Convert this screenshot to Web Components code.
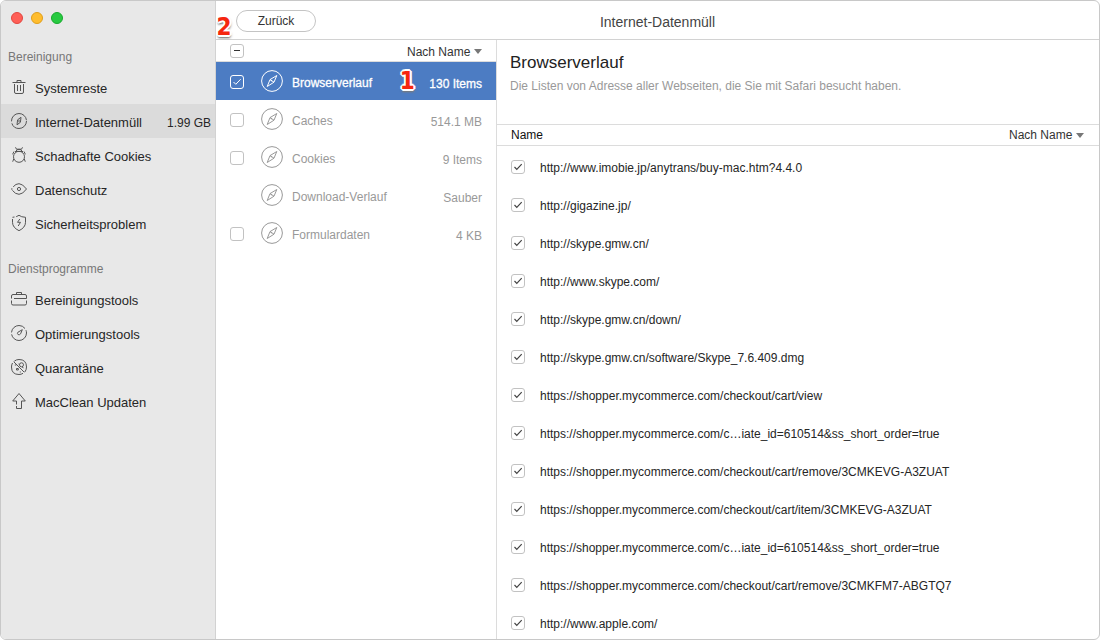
<!DOCTYPE html>
<html lang="de">
<head>
<meta charset="utf-8">
<meta name="viewport" content="width=device-width, initial-scale=1">
<title>MacClean – Internet-Datenmüll</title>
<style>
  html, body { height: 100%; }
  body { margin: 0; background: #fff; color: #262626; font: 12px/16px "Liberation Sans", Arial, sans-serif; }
</style>
</head>
<body>
<mc-window>
  <mc-sidebar slot="sidebar">
    <mc-nav-group heading="Bereinigung">
      <mc-nav-item icon="trash">Systemreste</mc-nav-item>
      <mc-nav-item icon="compass" detail="1.99 GB" current>Internet-Datenmüll</mc-nav-item>
      <mc-nav-item icon="bug">Schadhafte Cookies</mc-nav-item>
      <mc-nav-item icon="eye">Datenschutz</mc-nav-item>
      <mc-nav-item icon="shield">Sicherheitsproblem</mc-nav-item>
    </mc-nav-group>
    <mc-nav-group heading="Dienstprogramme">
      <mc-nav-item icon="case">Bereinigungstools</mc-nav-item>
      <mc-nav-item icon="gauge">Optimierungstools</mc-nav-item>
      <mc-nav-item icon="quarantine">Quarantäne</mc-nav-item>
      <mc-nav-item icon="up">MacClean Updaten</mc-nav-item>
    </mc-nav-group>
  </mc-sidebar>
  <mc-toolbar slot="toolbar">Internet-Datenmüll</mc-toolbar>
  <mc-category-list slot="list">
    <mc-category amount="130 Items" box="checked" step="1" selected>Browserverlauf</mc-category>
    <mc-category amount="514.1 MB" box="empty">Caches</mc-category>
    <mc-category amount="9 Items" box="empty">Cookies</mc-category>
    <mc-category amount="Sauber" box="none">Download-Verlauf</mc-category>
    <mc-category amount="4 KB" box="empty">Formulardaten</mc-category>
  </mc-category-list>
  <mc-detail slot="detail" heading="Browserverlauf">Die Listen von Adresse aller Webseiten, die Sie mit Safari besucht haben.</mc-detail>
</mc-window>

<script>
const ICONS = {
  trash: '<path d="M2.500 4.500h13M7 4.500V2.500h4V4.500M4.500 6V14q0 1.500 1.500 1.500h6q1.500 0 1.500-1.500V6M7.500 7v6M10.500 7v6"/>',
  compass: '<circle cx="9" cy="9" r="7.5" stroke-dasharray="21 2 23 1.100"/><path d="M11 5.300l-.6 5-3.400 2.500.6-5zM9 7.800v2.400"/>',
  bug: '<path d="M5.500 1.300l1 1.900h5l1-1.900M6 5.500q.3-2.200 3-2.200t3 2.200M4 5.500L2.600 8.300M14 5.500l1.400 2.800M5 5.500h8M3.700 13l-1 2.700M14.300 13l1 2.700"/><circle cx="9" cy="10.800" r="5.500"/>',
  eye: '<path d="M3.200 6.800Q5.800 3.700 9 3.700q3.500 0 7.500 5.300-3.800 5.300-7.500 5.300-3.600 0-6.600-3.900M1 9h1.500"/><circle cx="9" cy="9" r="1.600"/>',
  shield: '<path d="M6.200 2.700L9 1.300l2.700 1.400 3.800.6v5q0 5.200-6.500 8.400Q2.500 13.500 2.500 8.300V5M2.500 3.300l2-.3M9.800 5L7.500 8.300h3L8.200 12"/>',
  case: '<path d="M1.500 8.500V6q0-1.500 1.500-1.500h12q1.500 0 1.500 1.500V8.500H4M6.500 4.500V2.500h5v2M1.500 10.500V13.500q0 1.500 1.500 1.500h12q1.500 0 1.500-1.500V10.500"/>',
  gauge: '<circle cx="9" cy="9" r="7.500" stroke-dasharray="22 2 18 2 3.100"/><path d="M12.300 5.700L10.600 9.800q-1 1.400-2.500.8-1.200-1-.3-2.300z"/>',
  quarantine: '<path d="M4.300 3.200Q6.200 1.500 9 1.500q7.500 0 7.500 7.500 0 3-1.700 5M13 15.300q-1.700 1.200-4 1.200-7.500 0-7.500-7.500 0-2.200 1-4M3.700 3.700l10.600 10.600"/><circle cx="11.500" cy="6.800" r="2"/><path d="M9.500 6.200L8.500 6M12 9l1.500.8M4.800 7h1.500M6.500 10.500h1.800v1.500H6.500zM9.800 14h1"/>',
  up: '<path d="M6.500 12.500V9H2.700L9 1.500 15.300 9H11.500v7.500h-5V14"/>',
  safari: '<circle cx="11" cy="11" r="10.400"/><path d="M15.800 5.500L13 12.200 6.200 16.500 9 9.600zM9 9.600L13 12.200M9.500 10l1.500 1.200"/>'
};

const TEXT_SHEET = `
  * { box-sizing: border-box; }
  h1, h2, p { margin: 0; font-weight: normal; }
  svg { display: block; flex: none; fill: none; stroke: currentColor; }
`;

const CHECK_SHEET = `
  input[type=checkbox] {
    appearance: none; display: block; flex: none; width: 14px; height: 14px; margin: 0;
    border: 1px solid #c2c2c2; border-radius: 3px; background: #fff center / 12px 12px no-repeat;
  }
  input[type=checkbox]:checked {
    background-image: url("data:image/svg+xml,%3Csvg xmlns='http://www.w3.org/2000/svg' viewBox='0 0 12 12'%3E%3Cpath d='M2.500 6l2.300 2.300L9.700 3.200' fill='none' stroke='%23444' stroke-width='1.200'/%3E%3C/svg%3E");
  }
  input[type=checkbox]:indeterminate {
    background-image: linear-gradient(#333, #333); background-size: 6px 1px;
  }
`;

function define(name, render) {
  customElements.define(name, class extends HTMLElement {
    connectedCallback() {
      if (this.shadowRoot) return;
      const root = this.attachShadow({ mode: 'open' });
      root.innerHTML = `<style>${TEXT_SHEET}</style>` + render(this);
      root.querySelectorAll('[data-mixed]').forEach(box => { box.indeterminate = true; });
    }
  });
}

define('mc-window', () => `
  <style>
    :host {
      display: grid; grid-template: 39px minmax(0, 1fr) / 215px 281px minmax(0, 1fr);
      grid-template-areas: "side bar bar" "side list detail";
      box-sizing: border-box; height: 100vh; overflow: hidden;
      border: 1px solid #c8c8c8; border-radius: 6px; background: #fff;
    }
    slot { display: block; min-width: 0; min-height: 0; }
    [name=sidebar] { grid-area: side; }
    [name=toolbar] { grid-area: bar; }
    [name=list] { grid-area: list; }
    [name=detail] { grid-area: detail; }
    ::slotted(*) { height: 100%; }
  </style>
  <slot name="sidebar"></slot><slot name="toolbar"></slot>
  <slot name="list"></slot><slot name="detail"></slot>`);

define('mc-sidebar', () => `
  <style>
    :host { display: flex; flex-direction: column; gap: 21px; box-sizing: border-box; padding-top: 11px; background: #e8e8e8; border-right: 1px solid #d2d2d2; }
    .lights { display: flex; gap: 8px; padding: 0 10px; margin-bottom: 4px; }
    button { width: 12px; height: 12px; padding: 0; border: 1px solid #e2463f; border-radius: 50%; background: #ff5f57; }
    .min { background: #ffbd2e; border-color: #e09e1a; }
    .max { background: #28ca41; border-color: #17a92c; }
  </style>
  <div class="lights">
    <button aria-label="Schließen"></button>
    <button class="min" aria-label="Minimieren"></button>
    <button class="max" aria-label="Vergrößern"></button>
  </div>
  <slot></slot>`);

define('mc-nav-group', el => `
  <style>
    :host { display: block; }
    h2 { padding: 0 7px; margin-bottom: 5px; font-size: 12px; line-height: 16px; color: #777; }
  </style>
  <h2>${el.getAttribute('heading')}</h2>
  <nav><slot></slot></nav>`);

define('mc-nav-item', el => `
  <style>
    :host { display: block; }
    :host([current]) { background: #dbdbdb; }
    a { display: flex; align-items: center; gap: 7px; height: 34px; padding: 0 4px 0 9px; color: #262626; text-decoration: none; font-size: 13px; }
    svg { color: #555; }
    .name { flex: 1; padding-top: 3px; white-space: nowrap; }
    .detail { padding-top: 3px; font-size: 12px; white-space: nowrap; }
  </style>
  <a href="#">
    <svg width="18" height="18" viewBox="0 0 18 18" aria-hidden="true">${ICONS[el.getAttribute('icon')]}</svg>
    <span class="name"><slot></slot></span>
    ${el.hasAttribute('detail') ? `<span class="detail">${el.getAttribute('detail')}</span>` : ''}
  </a>`);

define('mc-toolbar', () => `
  <style>
    :host { display: grid; grid-template-columns: 1fr auto 1fr; align-items: center; box-sizing: border-box; padding: 2px 20px 0; border-bottom: 1px solid #d2d2d2; }
    .back { position: relative; justify-self: start; }
    button { display: block; width: 80px; height: 22px; padding: 0; border: 1px solid #c4c4c4; border-radius: 11px; background: #fff; color: #333; font: inherit; }
    mc-step { position: absolute; left: -20px; top: 5px; }
    h1 { padding-top: 2px; font-size: 14px; line-height: 16px; color: #444; }
  </style>
  <div class="back"><button>Zurück</button><mc-step>2</mc-step></div>
  <h1><slot></slot></h1>`);

define('mc-step', () => `
  <style>
    :host {
      display: block; width: 16px; text-align: center; color: #f5260f;
      font: bold 24px/24px "DejaVu Sans Condensed", "DejaVu Sans", sans-serif;
      text-shadow: -1px -1px #fff, 1px -1px #fff, -1px 1px #fff, 1px 1px #fff, 0 2px #fff, 2px 0 #fff, -2px 0 #fff, 0 -2px #fff, 0 3px 2px #777, 1px 2px 3px #888;
    }
  </style>
  <slot></slot>`);

define('mc-sort', () => `
  <style>
    :host { display: inline-flex; align-items: center; gap: 3px; }
    select { appearance: none; margin: 0; padding: 0; border: 0; background: none; color: #333; font: inherit; }
    i { width: 0; border: solid transparent; border-width: 5px 4px 0; border-top-color: #777; }
  </style>
  <select aria-label="Sortierung"><option>Nach Name</option></select><i></i>`);

define('mc-category-list', () => `
  <style>
    ${CHECK_SHEET}
    :host { display: block; box-sizing: border-box; border-right: 1px solid #dcdcdc; }
    header { display: flex; align-items: center; justify-content: space-between; height: 22px; padding: 0 14px; border-bottom: 1px solid #dcdcdc; }
    mc-sort { padding-top: 2px; }
  </style>
  <header><input type="checkbox" data-mixed aria-label="Alle auswählen"><mc-sort></mc-sort></header>
  <slot></slot>`);

define('mc-category', el => {
  const box = el.getAttribute('box');
  return `
  <style>
    ${CHECK_SHEET}
    :host { display: flex; align-items: center; height: 38px; padding: 0 14px; color: #999; }
    :host([selected]) { background: #4c7cc3; color: #fff; }
    :host([selected]) .text { -webkit-text-stroke: .3px; }
    :host([selected]) input:checked {
      border-color: #fff; background-color: transparent;
      background-image: url("data:image/svg+xml,%3Csvg xmlns='http://www.w3.org/2000/svg' viewBox='0 0 12 12'%3E%3Cpath d='M2.500 6l2.300 2.300L9.700 3.200' fill='none' stroke='white'/%3E%3C/svg%3E");
    }
    .check { width: 14px; margin: 2px 17px 0 0; }
    svg { margin-right: 9px; }
    label { flex: 1; padding-top: 3px; }
    .amount { padding-top: 5px; }
    mc-step { margin-right: 14px; }
  </style>
  <span class="check">${box === 'none' ? '' : `<input type="checkbox" id="pick" ${box === 'checked' ? 'checked' : ''}>`}</span>
  <svg width="22" height="22" viewBox="0 0 22 22" aria-hidden="true">${ICONS.safari}</svg>
  <label class="text" for="pick"><slot></slot></label>
  ${el.hasAttribute('step') ? `<mc-step>${el.getAttribute('step')}</mc-step>` : ''}
  <span class="text amount">${el.getAttribute('amount')}</span>`;
});

const ADDRESSES = [
  'http://www.imobie.jp/anytrans/buy-mac.htm?4.4.0',
  'http://gigazine.jp/',
  'http://skype.gmw.cn/',
  'http://www.skype.com/',
  'http://skype.gmw.cn/down/',
  'http://skype.gmw.cn/software/Skype_7.6.409.dmg',
  'https://shopper.mycommerce.com/checkout/cart/view',
  'https://shopper.mycommerce.com/c…iate_id=610514&amp;ss_short_order=true',
  'https://shopper.mycommerce.com/checkout/cart/remove/3CMKEVG-A3ZUAT',
  'https://shopper.mycommerce.com/checkout/cart/item/3CMKEVG-A3ZUAT',
  'https://shopper.mycommerce.com/c…iate_id=610514&amp;ss_short_order=true',
  'https://shopper.mycommerce.com/checkout/cart/remove/3CMKFM7-ABGTQ7',
  'http://www.apple.com/'
];

define('mc-detail', el => `
  <style>
    ${CHECK_SHEET}
    :host { display: flex; flex-direction: column; }
    header { flex: none; height: 84px; padding: 12px 13px 0; }
    h2 { font-size: 17px; line-height: 22px; color: #222; }
    p { padding-top: 4px; color: #999; }
    .scroll { flex: 1; min-height: 0; overflow: auto; scrollbar-width: none; }
    table { width: 100%; border-collapse: separate; border-spacing: 0; }
    th { height: 22px; padding: 0; border: solid #dcdcdc; border-width: 1px 0; text-align: left; font-weight: normal; color: #111; }
    th:first-child { padding-left: 14px; }
    th:last-child { padding-right: 15px; text-align: right; }
    mc-sort { vertical-align: top; }
    td { height: 38px; padding: 0; }
    td:first-child { width: 43px; padding-left: 14px; }
    tbody tr:first-child td { height: 40px; padding-top: 2px; }
    label { display: block; padding-top: 2px; white-space: nowrap; }
  </style>
  <header><h2>${el.getAttribute('heading')}</h2><p><slot></slot></p></header>
  <div class="scroll">
    <table>
      <thead><tr><th colspan="2" scope="col">Name</th><th><mc-sort></mc-sort></th></tr></thead>
      <tbody>${ADDRESSES.map((url, i) => `
        <tr><td><input type="checkbox" id="u${i}" checked></td><td colspan="2"><label for="u${i}">${url}</label></td></tr>`).join('')}
      </tbody>
    </table>
  </div>`);
</script>
</body>
</html>
